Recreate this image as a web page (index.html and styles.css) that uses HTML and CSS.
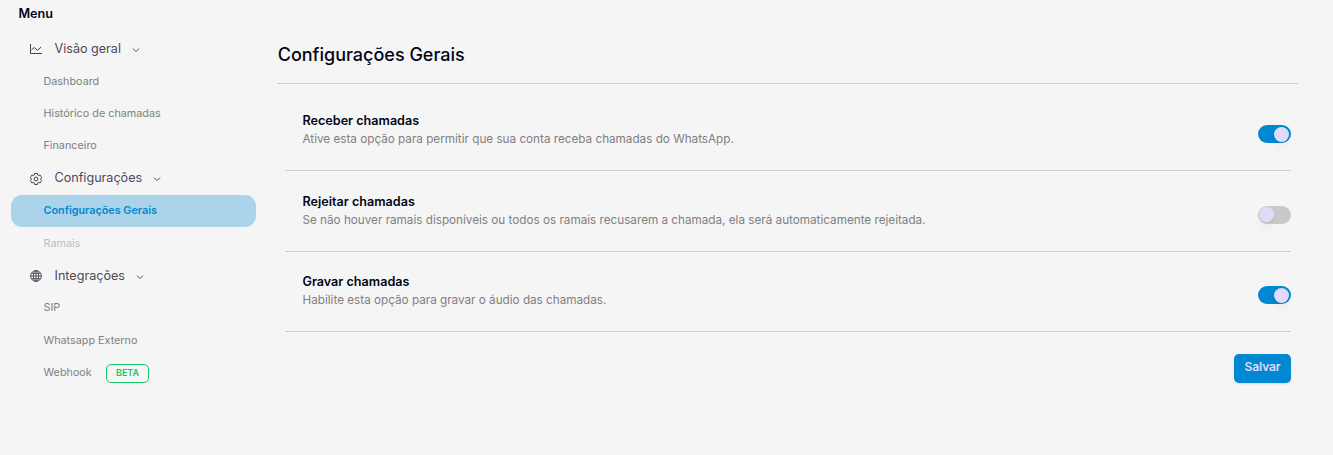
FILE: index.html
```html
<!DOCTYPE html>
<html lang="pt-BR">
<head>
<meta charset="utf-8">
<title>Configurações Gerais</title>
<link rel="stylesheet" href="styles.css">
</head>
<body>
<div class="layout">
  <nav class="sidebar">
    <div class="menu-title">Menu</div>
    <div class="group">
      <svg class="icon" viewBox="0 0 12 12"><path d="M.5 1v9.500H12M1.500 6.800l2.800-2.300 3.200 2.800L11.200 4"/></svg>
      <span>Visão geral</span>
      <svg class="chevron" viewBox="0 0 8 8"><path d="M1 2.6l3 3 3-3"/></svg>
    </div>
    <a class="item">Dashboard</a>
    <a class="item">Histórico de chamadas</a>
    <a class="item">Financeiro</a>
    <div class="group">
      <svg class="icon gear" viewBox="0 0 12 12"><path d="M4.600.5h2.800l.5 1.800.5.300 1.800-.5 1.500 2.500L10.400 6l1.300 1.400-1.500 2.500-1.800-.5-.5.300-.5 1.800H4.600l-.5-1.800-.5-.3-1.800.5L.3 7.400 1.600 6 .3 4.600l1.500-2.500 1.800.5.500-.3z"/><circle cx="6" cy="6" r="1.900"/></svg>
      <span>Configurações</span>
      <svg class="chevron" viewBox="0 0 8 8"><path d="M1 2.6l3 3 3-3"/></svg>
    </div>
    <a class="item active">Configurações Gerais</a>
    <a class="item disabled">Ramais</a>
    <div class="group">
      <svg class="icon globe" viewBox="0 0 12 12"><circle cx="6" cy="6" r="5.400"/><ellipse cx="6" cy="6" rx="2.600" ry="5.400"/><path d="M6 .5v11M.5 6h11M1.400 3.300h9.200M1.400 8.700h9.200"/></svg>
      <span>Integrações</span>
      <svg class="chevron" viewBox="0 0 8 8"><path d="M1 2.6l3 3 3-3"/></svg>
    </div>
    <a class="item">SIP</a>
    <a class="item">Whatsapp Externo</a>
    <a class="item">Webhook <span class="badge">BETA</span></a>
  </nav>
  <main class="content">
    <h1 class="title">Configurações Gerais</h1>
    <div class="settings">
      <section class="setting">
        <div><h2 class="name">Receber chamadas</h2><p class="desc">Ative esta opção para permitir que sua conta receba chamadas do WhatsApp.</p></div>
        <div class="switch on"><i class="knob"></i></div>
      </section>
      <section class="setting">
        <div><h2 class="name">Rejeitar chamadas</h2><p class="desc">Se não houver ramais disponíveis ou todos os ramais recusarem a chamada, ela será automaticamente rejeitada.</p></div>
        <div class="switch"><i class="knob"></i></div>
      </section>
      <section class="setting">
        <div><h2 class="name">Gravar chamadas</h2><p class="desc">Habilite esta opção para gravar o áudio das chamadas.</p></div>
        <div class="switch on"><i class="knob"></i></div>
      </section>
    </div>
    <button class="save">Salvar</button>
  </main>
</div>
</body>
</html>
```
FILE: styles.css
```css
* { box-sizing: border-box; }
body { margin: 0; background: #f5f5f5; font-family: Inter, "Liberation Sans", sans-serif; color: #020617; }
.layout { display: flex; height: 455px; overflow: hidden; }
.sidebar { width: 277px; padding: 0 21px 0 11px; flex: none; }
.menu-title { height: 32.600px; padding: 4px 0 0 7.500px; font-size: 12.600px; line-height: 20px; font-weight: 600; }
.group { display: flex; align-items: center; height: 32.330px; padding-left: 19px; font-size: 12.600px; color: #4b4b57; }
.group span { margin-top: -1px; }
.icon { width: 12px; height: 12px; margin-right: 12.500px; fill: none; stroke: #454550; stroke-width: 1; overflow: visible; }
.icon.gear { margin-top: 2px; stroke-linejoin: round; }
.icon.globe { stroke-width: .9; }
.chevron { width: 8px; height: 8px; margin: 2px 0 0 10.700px; fill: none; stroke: #4b4b57; stroke-width: 1; }
.item { display: flex; align-items: center; height: 32.200px; padding-left: 32.500px; border-radius: 11px; font-size: 10.800px; color: #808080; }
.item.active { height: 32px; margin: .9px 0 .6px; padding-bottom: 1px; background: #abd3e9; color: #0088d1; font-weight: 600; }
.item.disabled { color: #bdbdbd; }
.badge { height: 19px; margin: 2px 0 0 14.500px; padding: 0 8.700px; border: 1px solid #10c866; border-radius: 5px; font-size: 9px; line-height: 16px; font-weight: 600; color: #10c866; }
.content { width: 1021px; display: flex; flex-direction: column; }
.title { margin: 0; height: 84px; padding: 42px 0 0 .7px; border-bottom: 1px solid #cdcdcd; font-size: 18px; line-height: 26px; font-weight: 500; }
.settings { margin: 6px 7px 0 8px; }
.setting { display: flex; justify-content: space-between; height: 80.500px; padding: 21px 0 0 17.500px; border-bottom: 1px solid #cdcdcd; }
.setting:nth-child(2) { height: 81px; }
.setting:nth-child(3) { height: 80px; padding-top: 20.500px; }
.name { margin: 0; font-size: 12.600px; line-height: 19px; font-weight: 600; }
.desc { margin: 0; font-size: 11.710px; line-height: 18px; color: #808080; }
.switch { display: flex; align-items: center; width: 33px; height: 18px; margin-top: 14px; padding: 1px; border-radius: 9px; background: #c9c9c9; }
.switch.on { justify-content: flex-end; padding-right: 2.400px; background: #0088d1; }
.knob { width: 15px; height: 15px; border-radius: 50%; background: #e2d9fb; box-shadow: 0 8px 12px -2px rgba(0,0,0,.06), 0 3px 5px -3px rgba(0,0,0,.08); }
.save { align-self: flex-end; width: 57px; height: 29px; margin: 22px 7px 0 0; padding: 0 0 3px; border: 0; border-radius: 5px; background: #0088d1; color: #e2d9fb; font: 600 12px/26px Inter, sans-serif; letter-spacing: -.1px; box-shadow: 0 1px 2px rgba(0,0,0,.12); }
```
